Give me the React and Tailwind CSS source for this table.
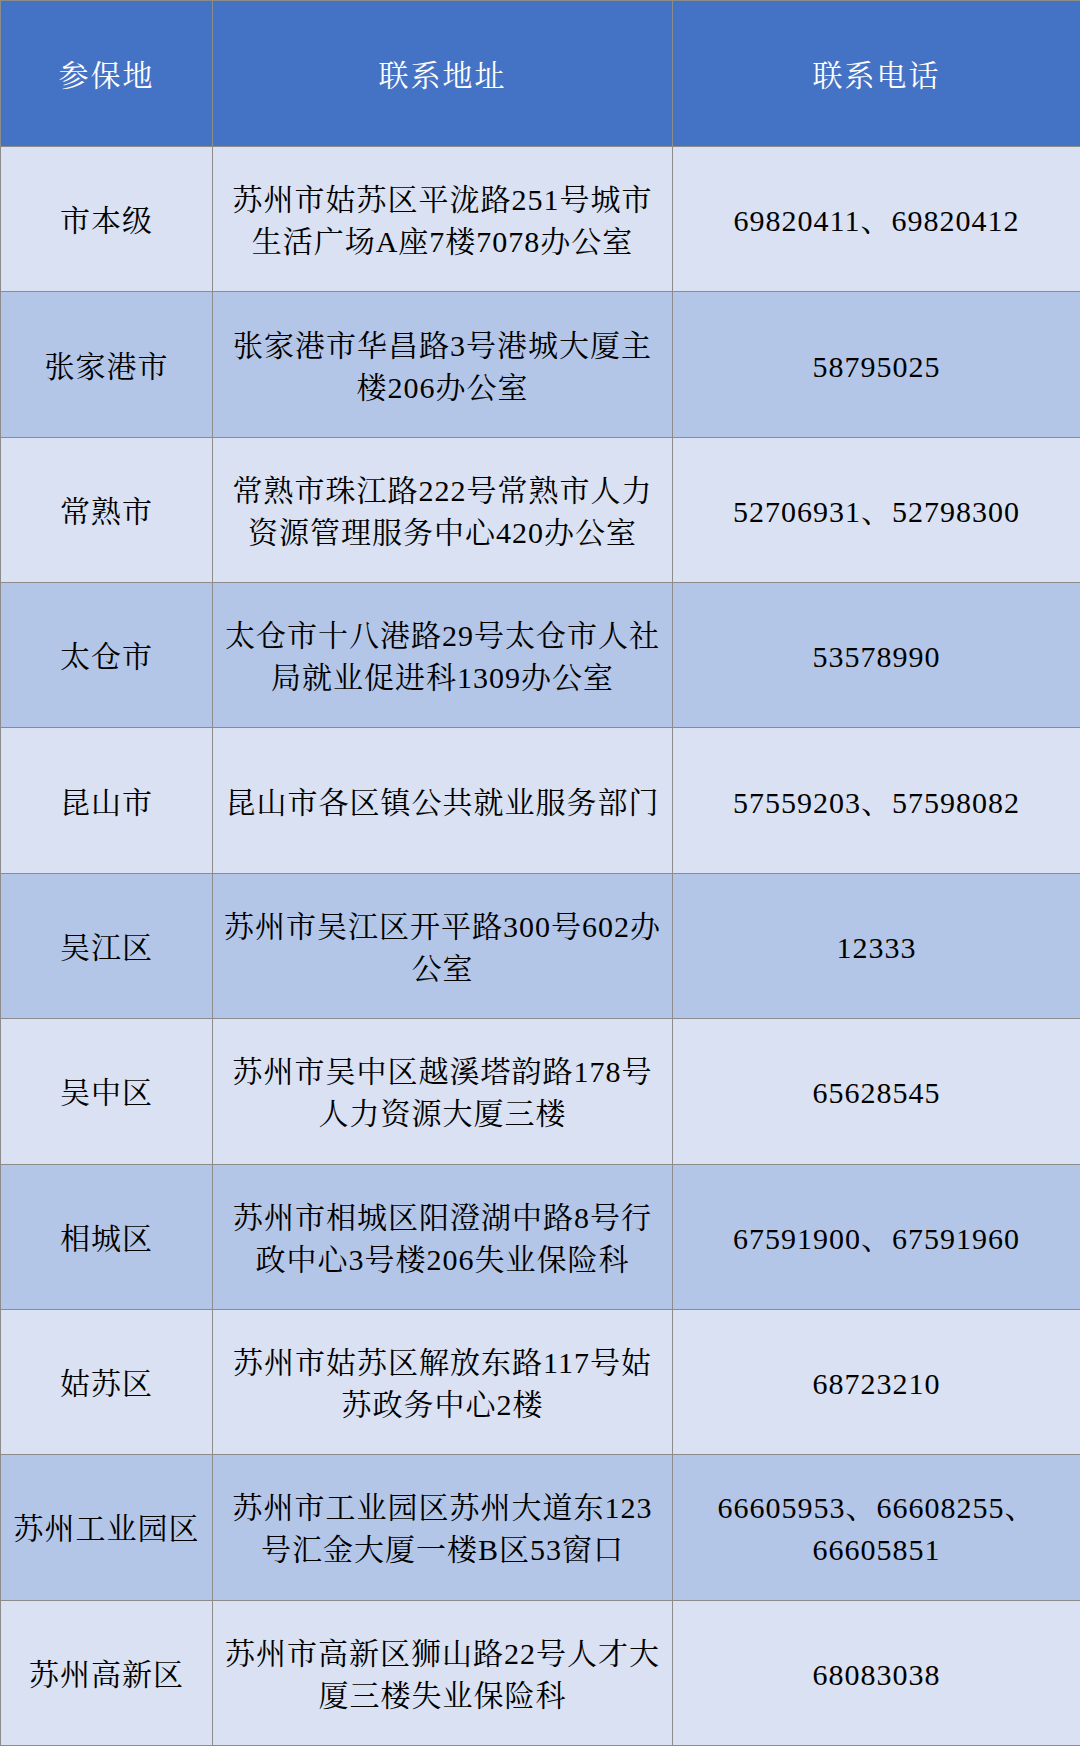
import React from "react";

const rows = [
  ["市本级", ["苏州市姑苏区平泷路251号城市", "生活广场A座7楼7078办公室"], ["69820411、69820412"]],
  ["张家港市", ["张家港市华昌路3号港城大厦主", "楼206办公室"], ["58795025"]],
  ["常熟市", ["常熟市珠江路222号常熟市人力", "资源管理服务中心420办公室"], ["52706931、52798300"]],
  ["太仓市", ["太仓市十八港路29号太仓市人社", "局就业促进科1309办公室"], ["53578990"]],
  ["昆山市", ["昆山市各区镇公共就业服务部门"], ["57559203、57598082"]],
  ["吴江区", ["苏州市吴江区开平路300号602办", "公室"], ["12333"]],
  ["吴中区", ["苏州市吴中区越溪塔韵路178号", "人力资源大厦三楼"], ["65628545"]],
  ["相城区", ["苏州市相城区阳澄湖中路8号行", "政中心3号楼206失业保险科"], ["67591900、67591960"]],
  ["姑苏区", ["苏州市姑苏区解放东路117号姑", "苏政务中心2楼"], ["68723210"]],
  ["苏州工业园区", ["苏州市工业园区苏州大道东123", "号汇金大厦一楼B区53窗口"], ["66605953、66608255、", "66605851"]],
  ["苏州高新区", ["苏州市高新区狮山路22号人才大", "厦三楼失业保险科"], ["68083038"]],
];

function Lines({ lines }) {
  return (
    <div className="flex flex-col items-center">
      {lines.map((l, i) => (
        <span key={i} className="whitespace-nowrap">{l}</span>
      ))}
    </div>
  );
}

export default function App() {
  const font = "font-[family-name:'Liberation_Serif','Noto_Serif_CJK_SC','Noto_Sans_CJK_SC',serif]";
  return (
    <div className={`w-[1080px] h-[1749px] bg-white ${font}`}>
      <div className="grid grid-cols-[212px_460px_408px] grid-rows-[146px_repeat(11,1fr)] h-[1746px] border-l border-t border-[#8c8c8c]">
        {["参保地", "联系地址", "联系电话"].map((h) => (
          <div
            key={h}
            className="bg-[#4472c4] text-white text-[30px] tracking-[2px] leading-[42px] pt-[4px] flex items-center justify-center border-r border-b border-[#8c8c8c]"
          >
            {h}
          </div>
        ))}
        {rows.map(([name, addr, phone], i) => {
          const bg = i % 2 === 0 ? "bg-[#d9e1f2]" : "bg-[#b4c6e7]";
          const cell = `${bg} text-black text-[30px] tracking-[1px] leading-[42px] pt-[4px] flex items-center justify-center text-center border-r border-b border-[#8c8c8c]`;
          return (
            <React.Fragment key={name}>
              <div className={cell}>
                <span className="whitespace-nowrap">{name}</span>
              </div>
              <div className={cell}>
                <Lines lines={addr} />
              </div>
              <div className={cell}>
                <Lines lines={phone} />
              </div>
            </React.Fragment>
          );
        })}
      </div>
    </div>
  );
}
